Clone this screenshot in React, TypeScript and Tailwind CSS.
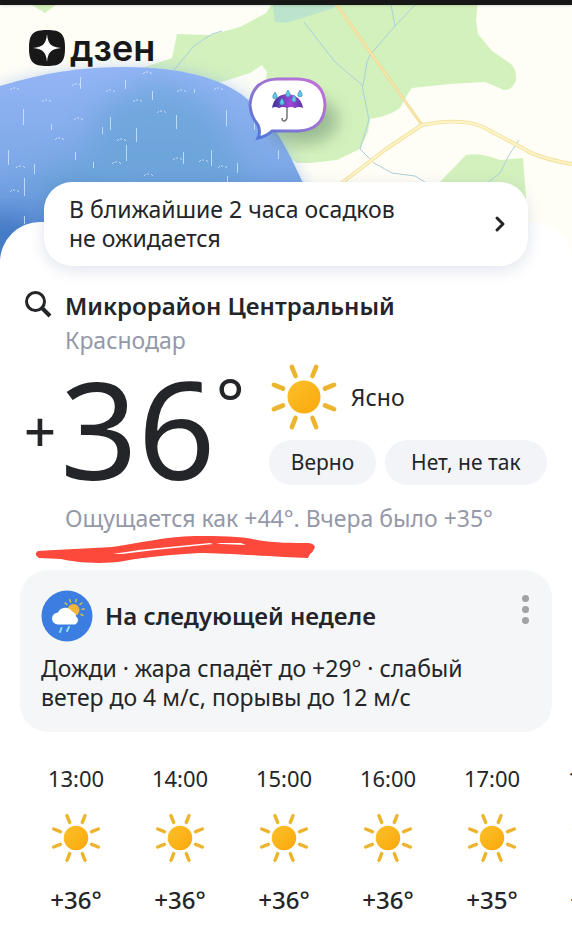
import { ChevronRight } from "lucide-react";

const hours = [
  { time: "13:00", temp: "+36°" },
  { time: "14:00", temp: "+36°" },
  { time: "15:00", temp: "+36°" },
  { time: "16:00", temp: "+36°" },
  { time: "17:00", temp: "+35°" },
  { time: "18:00", temp: "+35°" },
];

const rayAngles = [22, 68, 112, 158, 202, 248, 292, 338];

// x, y, length of every falling drop over the rain area
const drops = [
  [80, 77, 12], [125, 80, 9], [152, 91, 9], [23, 109, 16], [110, 117, 13],
  [136, 128, 14], [176, 115, 14], [226, 110, 16], [8, 150, 15], [75, 152, 8],
  [126, 145, 16], [183, 152, 12], [211, 150, 16], [34, 164, 10], [93, 162, 6],
  [24, 178, 18], [24, 216, 8], [237, 163, 10], [278, 150, 9], [227, 176, 8],
  [51, 124, 6], [102, 127, 7], [254, 122, 8], [194, 89, 4],
];

const splashes = [
  [14, 88], [46, 100], [76, 84], [110, 90], [147, 72], [181, 90], [218, 88],
  [161, 111], [59, 138], [121, 139], [116, 162], [177, 158], [14, 190],
  [148, 174], [203, 160], [137, 100], [20, 166], [78, 118], [222, 166],
];

function Sun({ className }: { className?: string }) {
  return (
    <svg viewBox="0 0 68 68" className={className} aria-hidden="true">
      <defs>
        <linearGradient id="sun" x1="0" y1="0" x2="1" y2="1">
          <stop offset="0" stopColor="#fcc02c" />
          <stop offset="1" stopColor="#fba80a" />
        </linearGradient>
      </defs>
      <circle cx="34" cy="34" r="16" fill="url(#sun)" />
      {rayAngles.map((a) => (
        <path
          key={a}
          d="M56 34H65.500"
          stroke="#ecb52f"
          strokeWidth="4.500"
          strokeLinecap="round"
          transform={`rotate(${a} 34 34)`}
        />
      ))}
    </svg>
  );
}

function RainMap() {
  return (
    <svg
      viewBox="0 0 572 262"
      preserveAspectRatio="xMidYMin slice"
      className="absolute inset-0 size-full"
      aria-hidden="true"
    >
      <defs>
        <linearGradient id="rain" x1="0.3" y1="0.25" x2="0.3" y2="1">
          <stop offset="0" stopColor="#94b5f6" />
          <stop offset="0.5" stopColor="#7ea9e8" />
          <stop offset="1" stopColor="#4c84cd" />
        </linearGradient>
        <filter id="soft" x="-50%" y="-50%" width="200%" height="200%">
          <feGaussianBlur stdDeviation="14" />
        </filter>
        <filter id="halo" x="-20%" y="-20%" width="140%" height="140%">
          <feGaussianBlur stdDeviation="8" />
        </filter>
        <linearGradient id="bubble" x1="1" y1="0" x2="0" y2="1">
          <stop offset="0" stopColor="#c66fdd" />
          <stop offset="0.5" stopColor="#9675cf" />
          <stop offset="1" stopColor="#4677dc" />
        </linearGradient>
        <linearGradient id="umbrella" x1="0" y1="0" x2="1" y2="0">
          <stop offset="0" stopColor="#3d3598" />
          <stop offset="0.6" stopColor="#a045d8" />
          <stop offset="1" stopColor="#5a35a8" />
        </linearGradient>
        <clipPath id="rainArea">
          <path d="M0 86C45 72 85 67 125 67C180 67 222 78 246 98C270 118 282 138 303 183L320 262H0Z" />
        </clipPath>
      </defs>

      <rect width="572" height="262" fill="#fffef6" />
      <path
        d="M177 34L210 35L240 27L266 13L274 0H478L476 20L478 34L492 51L511 64Q517 70 516 80Q513 90 504 90L485 82L450 84L412 88Q406 96 400 108Q390 116 370 119L368 132L360 149L345 156L337 160L310 163L297 163L250 130L262 100L266 80L262 72L240 82L218 90L140 80L145 67L172 58Z"
        fill="#d3f1bc"
      />
      <path d="M218 83L250 73L262 65L267 72L262 110H230Z" fill="#fbfcf6" />
      <path d="M272 0H344L334 8L286 23L275 22Z" fill="#bce3cb" />
      <path d="M30 4H57L45 13Z" fill="#d3f1bc" />
      <path d="M438 184L466 155Q480 152 500 160L523 158L527 210L520 222H430Z" fill="#d3f1bc" />

      <g fill="none" stroke="#abd0dc" strokeWidth="1">
        <path d="M304 22L335 62L362 85L369 120L360 149L374 163L392 173L415 176L428 184" />
        <path d="M415 5L395 26L370 55L367 62L363 86M391 5L395 26" />
        <path d="M519 140L509 155L500 173L486 184M174 70L194 46L212 34L222 31" />
      </g>
      <g fill="none" strokeLinejoin="round">
        <path d="M336 4L422 125" stroke="#f1d894" strokeWidth="3" />
        <path d="M336 4L422 125" stroke="#fdf0b9" strokeWidth="1" />
        <path d="M338 186L386 149L422 125Q465 117 485 128L526 150Q538 158 572 164" stroke="#f3e2a3" strokeWidth="4" />
        <path d="M338 186L386 149L422 125Q465 117 485 128L526 150Q538 158 572 164" stroke="#fdf4c8" strokeWidth="2" />
      </g>

      <path
        d="M0 86C45 72 85 67 125 67C180 67 222 78 246 98C270 118 282 138 303 183L320 262H0Z"
        fill="#8fb0ea"
        opacity="0.5"
        filter="url(#halo)"
      />
      <g clipPath="url(#rainArea)">
        <rect width="330" height="262" fill="url(#rain)" />
        <path d="M100 105L160 78L215 105L250 190L110 190L60 220L30 180L90 150Z" fill="#62a2d2" opacity="0.6" filter="url(#soft)" />
        <ellipse cx="4" cy="235" rx="34" ry="18" fill="#2f66b4" opacity="0.6" filter="url(#soft)" />
        <g stroke="#d9ebff" strokeWidth="1" opacity="0.75">
          {drops.map(([x, y, l]) => (
            <path key={`${x}-${y}`} d={`M${x + 0.5} ${y}v${l}`} />
          ))}
        </g>
        <g fill="none" stroke="#e4f1ff" strokeWidth="1" opacity="0.7">
          {splashes.map(([x, y]) => (
            <path key={`${x}-${y}`} d={`M${x - 4} ${y + 2}l2-2M${x - 1} ${y}h2M${x + 3} ${y}l2 2`} />
          ))}
        </g>
      </g>

      <ellipse cx="302" cy="120" rx="36" ry="24" fill="#577b64" opacity="0.45" filter="url(#halo)" />
      <path
        d="M277 79H298Q324 80 325 105Q324 130 298 131H272Q267 136 258 138Q261 132 258 125Q251 117 250 105Q252 80 277 79Z"
        fill="#fff"
        stroke="url(#bubble)"
        strokeWidth="3"
      />
      <path d="M287 107V118Q286 121 284 121Q282 121 282 118" fill="none" stroke="#76777b" strokeWidth="1.5" />
      <path d="M272 108Q274 95 287 94Q301 95 303 108Q299 106 295 108Q291 106 287 108Q283 106 279 108Q275 106 272 108Z" fill="url(#umbrella)" />
      <path d="M279 108Q280 99 287 94Q294 99 295 108" fill="none" stroke="#7e3fc4" />
      <g fill="#62c8e8" stroke="#3185b7" strokeWidth="0.6">
        {[[275, 92], [288, 90], [300, 90], [282, 98], [294, 95]].map(([x, y]) => (
          <path key={x} d={`M${x} ${y}q-3 4-2 6q2 2 4 0q1-2-2-6Z`} />
        ))}
      </g>
    </svg>
  );
}

function CloudIcon() {
  return (
    <svg viewBox="0 0 52 52" className="size-[52px] shrink-0" aria-hidden="true">
      <circle cx="26" cy="26" r="25.500" fill="#3b7de0" />
      {[-140, -110, -75, -40, -5, 30].map((a) => (
        <path key={a} d="M41 20H43.500" stroke="#cabd5c" strokeWidth="1.500" strokeLinecap="round" transform={`rotate(${a} 32.500 20)`} />
      ))}
      <circle cx="32.500" cy="20" r="6" fill="#f5b63b" />
      <path d="M17 34.500a6 6 0 0 1 0-12a8 8 0 0 1 14-1a6 6 0 0 1 4 5a4.500 4.500 0 0 1-1 8Z" fill="#fff" />
      <path d="M20.500 38l-1.500 4M28 37l-2 4" stroke="#8fe0fb" strokeWidth="2" strokeLinecap="round" />
    </svg>
  );
}

export default function App() {
  return (
    <main className="overflow-hidden bg-white text-[23px] text-[#232528] font-['Noto_Sans','Open_Sans',sans-serif]">
      <header className="relative h-[262px]">
        <RainMap />
        <div className="relative h-[5px] bg-[#171717] shadow-sm" />
        <a href="#" className="relative flex w-fit items-center gap-1 pt-6 pl-7 text-[#181818]">
          <svg viewBox="0 0 38 38" className="size-[38px]" aria-hidden="true">
            <path d="M19 1C33 1 37 5 37 19S33 37 19 37S1 33 1 19S5 1 19 1Z" fill="#181818" />
            <path d="M19 5C20 15 23 18 33 19C23 20 20 23 19 33C18 23 15 20 5 19C15 18 18 15 19 5Z" fill="#fff" />
          </svg>
          <span className="text-4xl leading-9 font-semibold font-['Inter',sans-serif]">дзен</span>
        </a>
      </header>

      <section className="relative -mt-10 flex flex-col rounded-t-[40px] bg-white pb-5">
        <button className="mx-11 -mt-10 flex items-center justify-between rounded-[28px] bg-white py-[13px] pr-4 pl-[25px] text-left leading-[29px] shadow-[0_4px_16px_rgba(40,60,120,0.14)]">
          <span>
            В ближайшие 2 часа осадков
            <br />
            не ожидается
          </span>
          <ChevronRight className="size-6" strokeWidth={3} />
        </button>

        <div className="mt-6 flex gap-[13px] pl-6">
          <button aria-label="Поиск" className="size-7">
            <svg viewBox="0 0 28 28" fill="none" stroke="currentColor" strokeWidth="3" aria-hidden="true">
              <circle cx="11.500" cy="11.500" r="9" />
              <path d="M18 18L26 26" strokeWidth="4" />
            </svg>
          </button>
          <div>
            <h1 className="text-2xl leading-8 font-semibold">Микрорайон Центральный</h1>
            <p className="text-[#9498a8] leading-9">Краснодар</p>
          </div>
        </div>

        <div className="flex items-start pl-6">
          <div className="flex">
            <span className="mt-11 text-[56px] leading-14 font-medium">+</span>
            <span className="ml-1 text-[136px] leading-[140px]">36</span>
            <span className="text-[68px] leading-22">°</span>
          </div>
          <div className="ml-6 pt-1">
            <div className="flex items-center gap-3">
              <Sun className="size-[70px]" />
              <span>Ясно</span>
            </div>
            <div className="mt-2 flex gap-[9px] text-[21px]">
              <button className="h-[45px] rounded-full bg-[#f2f4f8] px-[22px]">Верно</button>
              <button className="h-[45px] rounded-full bg-[#f2f4f8] px-[26px]">Нет, не так</button>
            </div>
          </div>
        </div>

        <div className="relative mt-1 pl-[65px]">
          <p className="text-[#9498a8] leading-8">Ощущается как +44°. Вчера было +35°</p>
          <svg viewBox="0 0 282 30" className="absolute top-8 left-[34px] w-[282px]" aria-hidden="true">
            <path
              d="M4 17C25 16 55 14 78 13C105 9 130 3 161 2C185 2 207 2 223 6C240 9 260 9 275 9Q283 11 280 15Q279 18 276 20L274 24L250 23C215 21 185 19 165 19C135 21 112 23 90 27C65 31 40 28 27 25L5 24Q-1 20 4 17Z"
              fill="#fd483c"
            />
            <path d="M79 20L105 16L145 12L176 9L179 10L160 12L121 16L88 20ZM182 9L207 9L212 11L187 10Z" fill="#fff" />
          </svg>
        </div>

        <article className="mx-5 mt-9 rounded-[28px] bg-[#f4f6f8] px-[21px] py-5">
          <div className="flex items-center gap-3">
            <CloudIcon />
            <h2 className="flex-1 text-2xl font-semibold">На следующей неделе</h2>
            <button aria-label="Ещё" className="flex w-3 flex-col items-center gap-1 self-start pt-[5px]">
              <i className="size-[7px] rounded-full bg-[#a0a2a6]" />
              <i className="size-[7px] rounded-full bg-[#a0a2a6]" />
              <i className="size-[7px] rounded-full bg-[#a0a2a6]" />
            </button>
          </div>
          <p className="mt-3 leading-[29px]">
            Дожди · жара спадёт до +29° · слабый
            <br />
            ветер до 4 м/с, порывы до 12 м/с
          </p>
        </article>

        <ul className="mt-7 flex overflow-hidden pl-6">
          {hours.map(({ time, temp }) => (
            <li key={time} className="flex w-26 shrink-0 flex-col items-center">
              <span className="text-[22px] leading-9">{time}</span>
              <Sun className="my-4 size-[52px]" />
              <span className="text-2xl leading-10 font-medium">{temp}</span>
            </li>
          ))}
        </ul>
      </section>
    </main>
  );
}
